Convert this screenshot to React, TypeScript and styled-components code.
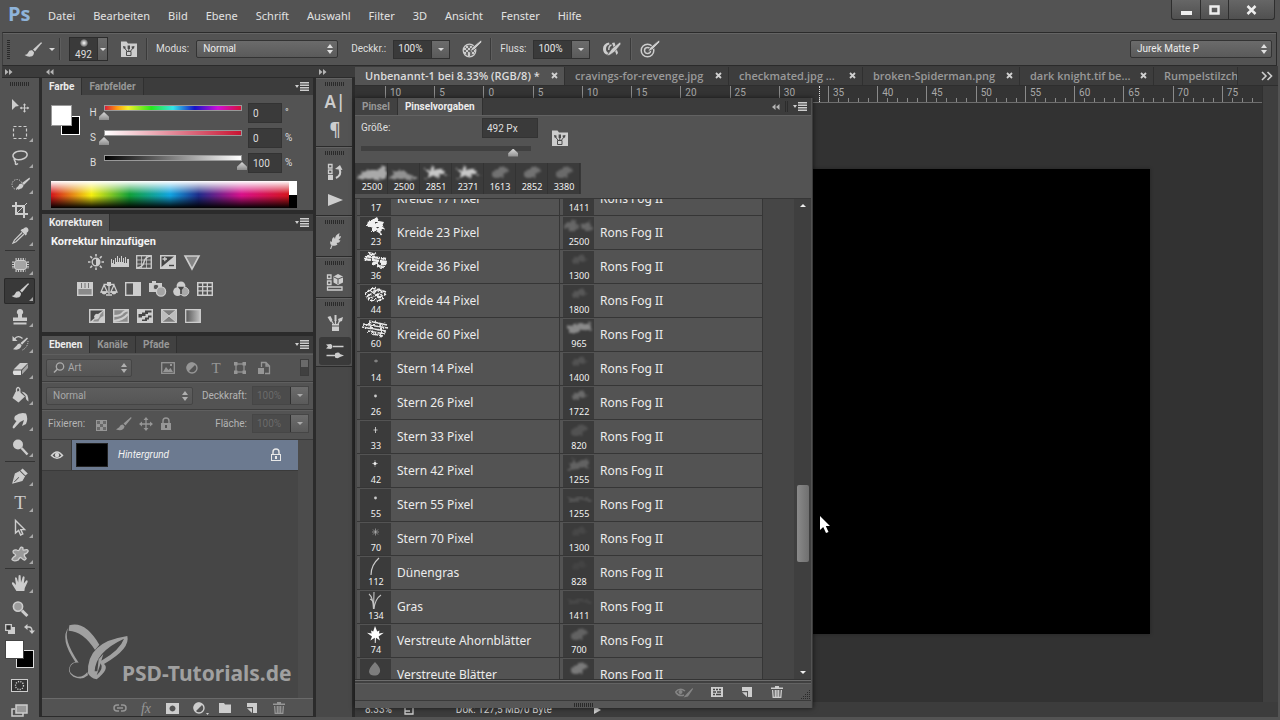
import React, { ReactNode } from "react";
import styled, { createGlobalStyle, css } from "styled-components";

const GlobalStyle = createGlobalStyle`
  *, *::before, *::after { box-sizing: border-box; }
  body { margin: 0; background: #535353; color: #dedede; font: 10px/14px Roboto, "Noto Sans", sans-serif; }
  button, input, select { font: inherit; color: inherit; margin: 0; padding: 0; border: 0; background: none; }
  h2, ul { margin: 0; padding: 0; list-style: none; }
`;

const c = {
  panel: "#535353",
  dark: "#2b2b2b",
  bar: "#3c3c3c",
  well: "#3a3a3a",
  icon: "#cdcdcd",
  dim: "#969696",
};

/* ---------- icons ---------- */

const Svg = styled.svg<{ $color?: string }>`
  display: block;
  flex: none;
  overflow: visible;
  color: ${(p) => p.$color ?? c.icon};
`;

function Icon({ w = 16, h = w, color, children }: { w?: number; h?: number; color?: string; children: ReactNode }) {
  return (
    <Svg width={w} height={h} viewBox={`0 0 ${w} ${h}`} $color={color} fill="currentColor" aria-hidden="true">
      {children}
    </Svg>
  );
}

const line = { fill: "none", stroke: "currentColor" };

const BrushPaths = () => (
  <>
    <path d="M18 2.2 L10 9.4 L12 11.4 L18.7 3.2 Q19 2 18 2.2Z" />
    <path d="M9.2 10.2 Q6 9.8 5.2 12.4 Q4.6 14.4 1.6 15 Q4.4 17 7.6 16.6 Q11 16 11 12.2Z" />
  </>
);
const TwoChevrons = ({ left = false }: { left?: boolean }) => (
  <Icon w={8} h={6} color="#b4b4b4">
    {left ? <path d="M3.5 0 V6 L0 3Z M7.5 0 V6 L4 3Z" /> : <path d="M0 0 V6 L3.5 3Z M4 0 V6 L7.5 3Z" />}
  </Icon>
);
const Caret = ({ color = "#dadada" }: { color?: string }) => (
  <Icon w={6} h={3} color={color}><path d="M0 0 H6 L3 3Z" /></Icon>
);
const UpDown = ({ color = "#e0e0e0" }: { color?: string }) => (
  <Icon w={6} h={10} color={color}><path d="M0 4 L3 0 L6 4Z M0 6 H6 L3 10Z" /></Icon>
);
const BrushFolder = () => (
  <Icon w={18} h={18}>
    <path d="M1 1.5 H6.5 L8 3.5 H17 V17 H1Z" />
    <g stroke="#4a4a4a" fill="none" strokeWidth="1">
      <path d="M6.5 11.5 V15.5 H11 V11.5Z M7 11 L4.8 8.5 M8.8 11 V9 M10.6 11 L12.6 8.5" />
    </g>
    <path fill="#4a4a4a" d="M3 6 L5.5 6.5 V9 L3.5 8.5Z M7.6 5.5 H10 V9 H7.6Z M11.5 6.5 L14.5 6 L14 8.5 L12 9Z" />
  </Icon>
);
const MenuIcon = () => (
  <Icon w={14} h={9}><path d="M0 3 H4 L2 6Z M5 0 H14 V1.4 H5Z M5 2.5 H14 V4 H5Z M5 5 H14 V6.4 H5Z M5 7.5 H14 V9 H5Z" /></Icon>
);

type Tool = { name: string; art: ReactNode; single?: boolean };
const toolGroups: Tool[][] = [
  [
    { name: "Verschieben", single: true, art: <><path d="M2 3 L9 10 L5.6 10.6 L2 14Z" /><path {...line} strokeWidth="1.1" d="M14.5 8 V16 M10.5 12 H18.5" /><path d="M14.5 7.2 L12.9 9.3 H16.1Z M14.5 16.8 L12.9 14.7 H16.1Z M9.7 12 L11.8 10.4 V13.6Z M19.3 12 L17.2 10.4 V13.6Z" /></> },
    { name: "Auswahlrechteck", art: <rect {...line} x="3.5" y="4.5" width="13" height="12" strokeWidth="1.2" strokeDasharray="3 2" /> },
    { name: "Lasso", art: <path {...line} strokeWidth="1.5" d="M5 11 C0 7 5 3 11 3 C18 3 19 8 14 10.5 C10 12.5 6 12 4.5 10.5 C3 12 6 13 5.5 15 C5 17 7 16.5 8 15.5" /> },
    { name: "Schnellauswahl", art: <><circle {...line} cx="7" cy="10.5" r="5" strokeDasharray="1.2 1.3" /><path d="M19.5 3.5 L12 9 L13.8 11 L20 5Z M11.4 9.4 Q8.6 9.6 8.4 12 L5.6 14.6 Q12 16.6 13.6 11.6Z" /></> },
    { name: "Freistellen", art: <><path {...line} strokeWidth="2" d="M6 2 V14 H18 M2 6 H14 V18" /><path {...line} d="M7 13 L17 3" /></> },
    { name: "Pipette", art: <><path d="M13 3 Q16 0 18 2.5 Q19.5 5 16.5 7 L17 8 L15.6 9.4 L10.6 4.4 L12 3Z" /><path {...line} strokeWidth="1.2" d="M12 6.5 L4.5 14 L3 17 L6 15.8 L13.8 8.2" /></> },
  ],
  [
    { name: "Reparaturpinsel", art: <><rect x="4.5" y="5.5" width="12" height="9" rx="2.5" fill="#a4a4a4" /><rect {...line} x="4.5" y="5.5" width="12" height="9" rx="2.5" strokeWidth="1" /><path {...line} strokeDasharray="1.2 1.2" strokeWidth="2" d="M5.5 4 H15.5 M5.5 16 H15.5 M3 6.5 V14 M18 6.5 V14" /></> },
    { name: "Pinsel", art: <BrushPaths /> },
    { name: "Kopierstempel", art: <><path d="M10 2 A3 3 0 0 1 12 7.4 V10.5 H17 V14 H3 V10.5 H8 V7.4 A3 3 0 0 1 10 2Z" /><path d="M3.5 15.5 H16.5 V17.5 H3.5Z" /></> },
    { name: "Protokollpinsel", art: <><path d="M17 4.5 L10.5 10 L12 11.8 L18 5.5Z M10 10.6 Q7.4 10.6 6.8 12.6 L3 16.2 Q10 18 11.6 12.6Z" /><path {...line} strokeWidth="1.4" d="M4.5 6 Q8 1.5 12.5 5.5" /><path d="M2.5 3 V8 H7.5Z" /><path {...line} strokeDasharray="1 1" d="M18 8 Q18 14 12.5 17" /></> },
    { name: "Radiergummi", art: <><path d="M10 4 H18 L11.5 10.5 H3.5Z" /><path fill="#a4a4a4" d="M18 5 V9 L12 15.5 V11.5Z" /><path fill="#dedede" d="M3.5 11.5 H11 V16 H4 Q2 14 3.5 11.5Z" /></> },
    { name: "Füllwerkzeug", art: <><path d="M8.5 6 L15 11.5 L8.5 17.5 L2.5 13 L5.5 7Z" /><path {...line} strokeWidth="1.3" d="M6.5 10 V4 Q8 1 9.8 4 V9" /><path d="M11.5 6.5 Q18.5 7.5 18.5 16.5 Q15.5 15 15.6 11Z" /></> },
    { name: "Wischfinger", art: <path d="M5 5 Q10 1 16 2.5 Q18.5 8 16 13 L12 15 L14 9 L10 11 L4 17.5 Q2 17.5 3 15 L6.5 10 Q3 9 5 5Z" /> },
    { name: "Abwedler", art: <><circle cx="8" cy="7.5" r="5" /><path {...line} strokeWidth="2.4" d="M11.5 11 L17.5 17.5" /></> },
  ],
  [
    { name: "Zeichenstift", art: <><path d="M12.6 2.4 L17.8 7.4 L15.4 9.6 L10.4 4.6Z" /><path {...line} strokeWidth="1.2" d="M10 5.4 L5.4 8 L3 17 L12 14.4 L14.6 10" /><path d="M10 5.4 L5.4 8 L3.6 16 L8.6 11 L9.2 11.6 L4.4 16.6 L12 14.4 L14.6 10Z" /></> },
    { name: "Text", art: <text x="10" y="16.5" fontSize="19" textAnchor="middle" fontFamily="Liberation Serif, serif">T</text> },
    { name: "Pfadauswahl", art: <path {...line} strokeWidth="1.4" d="M5.5 2.5 V15 L8.6 12.4 L10.6 17 L12.8 16 L10.8 11.6 H14.6Z" /> },
    { name: "Eigene Form", art: <path fill="#9a9a9a" stroke="currentColor" strokeWidth="1.3" d="M9.5 5.5 Q11 1.5 13 4 Q12.6 6 13.6 6.2 Q18 4.6 18.2 7 Q17 10 14.4 10 Q13.6 12 16.2 14.4 Q15 18 11 13.6 Q9.8 13 8.4 15.8 Q4 18 2 15.6 Q2 14 5.6 11.6 Q6 10.6 3.4 9 Q2 6 6 5.8 Q8.6 7.4 9.5 5.5Z" /> },
  ],
  [
    { name: "Hand", art: <path d="M6.4 18 L2 11 Q1.4 8.6 3.6 9.6 L6 12 L5 5 Q5.6 3.4 6.8 5 L8.2 9.6 L8.6 2.6 Q9.8 1.2 10.6 2.6 L11 9.6 L12.8 3.8 Q14 2.6 14.6 4.4 L13.8 10.6 L16.2 7.4 Q18 6.8 17.6 9 L14.8 15 L14.4 18Z" /> },
    { name: "Zoom", single: true, art: <><circle cx="8" cy="7.6" r="4.6" fill="#9c9c9c" stroke="currentColor" strokeWidth="1.6" /><path {...line} strokeWidth="3" d="M12 11.6 L17.4 17" /></> },
  ],
];

const adjustIcons: { name: string; art: ReactNode }[][] = [
  [
    { name: "Helligkeit", art: <><circle {...line} cx="8" cy="8" r="3.8" strokeWidth="1.4" /><path d="M8 4.2 A3.8 3.8 0 0 1 8 11.8Z" /><path {...line} strokeWidth="1.6" d="M8 0 V2.5 M8 13.5 V16 M0 8 H2.5 M13.5 8 H16 M2.3 2.3 L4.1 4.1 M11.9 11.9 L13.7 13.7 M2.3 13.7 L4.1 11.9 M11.9 4.1 L13.7 2.3" /></> },
    { name: "Tonwertkorrektur", art: <path d="M-1 13 V5 H0 V9 H1 V6 H2 V10 H3 V4 H4 V8 H5 V2 H6 V8 H7 V4 H8 V8 H9 V2 H10 V8 H11 V4 H12 V9 H13 V3 H14 V9 H15 V5 H17 V13Z" /> },
    { name: "Gradationskurven", art: <><rect {...line} x=".7" y="1.7" width="14.6" height="12.6" strokeWidth="1.3" /><path {...line} strokeWidth=".8" d="M5.5 2 V14 M10.5 2 V14 M1 6 H15 M1 10 H15" /><path {...line} strokeWidth="1.4" d="M1 14 Q7 13 8 8 Q9 2.6 15 2" /></> },
    { name: "Belichtung", art: <><path d="M0 1 H16 V15 H0Z" /><path fill="#444" d="M1.5 2.5 H14 L1.5 13Z" /><path {...line} strokeWidth="1.3" d="M2.5 5 H7 M4.8 3 V7.3" /><path stroke="#444" strokeWidth="1.4" d="M9 11.5 H14" /></> },
    { name: "Dynamik", art: <path d="M1 2 H15 L8 15Z" fill="#858585" stroke="currentColor" strokeWidth="1.6" /> },
  ],
  [
    { name: "Farbton", art: <><path d="M0 1 H16 V15 H0Z" /><path fill="#8a8a8a" d="M1.4 8 H14.6 V13.6 H1.4Z" /><path stroke="#777" strokeWidth="1" d="M4.5 2 V7 M8 2 V7 M11.5 2 V7" /></> },
    { name: "Farbbalance", art: <><path {...line} strokeWidth="1.3" d="M8 1 V13 M2.5 3.5 H13.5 M3 4 L0 11 H6.4Z M13 4 L9.8 11 H16Z M5 14 H11" /><path d="M0 10.5 H6.4 Q5 13.5 3.2 13.5 Q1 13.5 0 10.5Z M9.6 10.5 H16 Q15 13.5 12.8 13.5 Q11 13.5 9.6 10.5Z M6 1 H10 V5 H6Z" /></> },
    { name: "Schwarzweiß", art: <><rect {...line} x=".7" y="1.7" width="14.6" height="12.6" strokeWidth="1.4" /><path d="M8 2 H15 V14 H8Z" /></> },
    { name: "Fotofilter", art: <><path d="M0 2 H3 V0 H7 V2 H13 V7 H8 V11 H0Z" /><circle cx="7" cy="6" r="2.8" fill="#555" stroke="currentColor" /><circle cx="12" cy="10.5" r="4.6" fill="#a4a4a4" stroke="currentColor" strokeWidth="1.3" /></> },
    { name: "Kanalmixer", art: <><circle cx="8" cy="4.8" r="4.4" /><circle cx="4.6" cy="10.6" r="4.4" /><circle cx="11.4" cy="10.6" r="4.4" fill="#a8a8a8" stroke="currentColor" /><path fill="#444" d="M4.8 5.8 H11.2 L8.8 9 V13 H7.2 V9Z" /></> },
    { name: "Color Lookup", art: <path fillRule="evenodd" d="M0 1 H16 V15 H0Z M1.5 2.5 V5 H5 V2.5Z M6.3 2.5 V5 H9.7 V2.5Z M11 2.5 V5 H14.6 V2.5Z M1.5 6.3 V9.3 H5 V6.3Z M6.3 6.3 V9.3 H9.7 V6.3Z M11 6.3 V9.3 H14.6 V6.3Z M1.5 10.6 V13.6 H5 V10.6Z M6.3 10.6 V13.6 H9.7 V10.6Z M11 10.6 V13.6 H14.6 V10.6Z" /> },
  ],
  [
    { name: "Umkehren", art: <><path d="M0 1 H16 V15 H0Z" /><path fill="#484848" d="M1.5 2.5 H14 L9 6 Q6 5 5 8.6 L5.6 10 L1.5 13.5Z" /><path fill="#484848" d="M5.4 11.4 Q10 12.4 11 7 L14.4 3 V8 Q11 9 9.4 13.4 H4Z" opacity=".45" /></> },
    { name: "Tontrennung", art: <><path d="M.7 1.7 H15.3 V14.3 H.7Z" fill="#8c8c8c" stroke="currentColor" strokeWidth="1.3" /><path {...line} strokeWidth="2" d="M1 8 Q8 8 10 4.5 Q12 2.5 15 2.5 M1 13 Q10 12 15 6" /></> },
    { name: "Schwellenwert", art: <><path d="M0 1 H16 V15 H0Z" /><path fill="#444" d="M1.5 6 H5 V4.5 H8 V2.5 H14.5 V4.5 H11 V6 H8.5 V8 H5 V9.5 H1.5Z M5 13 V11.5 H8 V9.5 H11 V7.5 H14.5 V9.5 H12 V11.5 H10 V13Z" /></> },
    { name: "Selektive Farbkorrektur", art: <><path d="M.7 1.7 H15.3 V14.3 H.7Z" fill="#7d7d7d" stroke="currentColor" strokeWidth="1.3" /><path fill="#bdbdbd" d="M1 2 L8 8 L1 14Z M15 2 L8 8 L15 14Z" /><path {...line} d="M1 2 L15 14 M15 2 L1 14" /></> },
    { name: "Verlaufsumsetzung", art: <path d="M.7 1.7 H15.3 V14.3 H.7Z" fill="url(#ramp)" stroke="currentColor" strokeWidth="1.3" /> },
  ],
];

/* ---------- brush previews ---------- */

const HiddenDefs = styled.svg`position: absolute;`;

const Defs = () => (
  <HiddenDefs width="0" height="0" aria-hidden="true">
    <defs>
      <linearGradient id="ramp"><stop stopColor="#555" /><stop offset="1" stopColor="#c4c4c4" /></linearGradient>
      <filter id="fog" x="-60%" y="-60%" width="220%" height="220%">
        <feTurbulence type="fractalNoise" baseFrequency=".2" numOctaves="3" seed="7" />
        <feDisplacementMap in="SourceGraphic" scale="8" xChannelSelector="R" yChannelSelector="G" />
        <feGaussianBlur stdDeviation="1.1" />
      </filter>
      <filter id="chalk" x="-30%" y="-30%" width="160%" height="160%">
        <feTurbulence type="fractalNoise" baseFrequency=".4" numOctaves="2" seed="9" />
        <feDisplacementMap in="SourceGraphic" scale="3" xChannelSelector="R" yChannelSelector="G" />
      </filter>
    </defs>
  </HiddenDefs>
);

const art: Record<string, ReactNode> = {
  none: null,
  chalk23: <path filter="url(#chalk)" d="M8 4 L14 2 L17 0 L19 4 L24 5 L22 9 L25 12 L20 13 L22 18 L16 14 L12 15 L12 11 L7 9Z M14 5 L16 7 L18 5Z M16 10 L18 12 L19 10Z" fill="#f0f0f0" fillRule="evenodd" />,
  chalk36: <g filter="url(#chalk)" stroke="#eee" strokeWidth="2.4" fill="none"><path d="M8 2 L16 4 M5 5 L26 8 M4 8 L27 11 M12 12 L26 13 M17 15 L24 16" strokeDasharray="7 1" /></g>,
  chalk44: <g filter="url(#chalk)" stroke="#eee" strokeWidth="1.8" fill="none"><path d="M5 9 L12 3 L26 7 M6 12 L20 4 M8 14 L24 6 M11 16 L26 9 M16 17 L24 13 M10 5 L22 14" strokeDasharray="6 1" /></g>,
  chalk60: <g filter="url(#chalk)" stroke="#e6e6e6" strokeWidth="1.6" fill="none"><path d="M9 2 L27 6 M3 5 L28 9 M2 8 L26 12 M8 12 L25 15 M12 15 L23 17 M9 3 L13 14 M20 5 L22 15" /></g>,
  star1: <path d="M14 8 H18 M16 6.5 V9.5" stroke="#aaa" strokeWidth=".8" />,
  star2: <circle cx="15.5" cy="9" r="1.4" fill="#ccc" />,
  star3: <path d="M13.5 9 H17.5 M15.5 6 V12" stroke="#ddd" strokeWidth=".8" />,
  star4: <><path d="M12 8.5 H18 M15 5 V12" stroke="#aaa" strokeWidth=".7" /><circle cx="15" cy="8.5" r="1.5" fill="#eee" /></>,
  star5: <path d="M12 9 H19 M15.5 5.5 V12.5 M13 6.5 L18 11.5 M18 6.5 L13 11.5" stroke="#bbb" strokeWidth=".6" />,
  dune: <path d="M11 18 Q11 8 19 1" fill="none" stroke="#ccc" strokeWidth="1.2" />,
  grass: <path d="M13.5 18 Q13 6 9 3 M13.5 18 L14 1 M14 18 Q15 8 21 4 M13.5 14 Q13 9 10 8" fill="none" stroke="#c4c4c4" strokeWidth="1.1" />,
  maple: <path d="M15 1 L17.2 6.4 L19.4 5.4 L19 8.4 L23.8 7.8 L18.6 11.4 L20 15.6 L16 12.8 L15.6 18 L14.8 18 L14.8 12.8 L10.4 15.6 L12 11.4 L7 7.8 L11.6 8.4 L11 5.4 L13.2 6.4Z" fill="#fff" />,
  leaf: <path d="M15 3 Q21 9 20 13 Q18 17 15 16.5 Q10 17 9 13 Q9 9 15 3Z" fill="#7e7e7e" />,
};

const Fog = ({ level, shape }: { level: number; shape: number }) => (
  <g filter="url(#fog)" fill="#d8d8d8" opacity={level}>
    {shape === 0 && <><ellipse cx="9" cy="9" rx="6" ry="5" /><ellipse cx="23" cy="10" rx="6" ry="4" /></>}
    {shape === 1 && <><ellipse cx="16" cy="9" rx="7" ry="3" /><ellipse cx="19" cy="7" rx="3" ry="4" /></>}
    {shape === 2 && <><ellipse cx="11" cy="10" rx="7" ry="4" /><ellipse cx="19" cy="8" rx="9" ry="4" /></>}
    {shape === 3 && <path d="M4 15 L10 4 L15 9 L23 2 L27 13Z" />}
    {shape === 4 && <><ellipse cx="13" cy="11" rx="5" ry="4" /><ellipse cx="19" cy="7" rx="5" ry="4" /><circle cx="17" cy="12" r="3" /></>}
    {shape === 5 && <path d="M5 9 H28 V12 H5Z" />}
    {shape === 6 && <path d="M3 11 L12 7 L18 8 L30 3 V16 H2Z" />}
    {shape === 7 && <path d="M2 16 L4 10 L12 7 L20 12 L29 13 V16 H2Z" />}
    {shape === 8 && <path d="M4 4 L9 8 L14 3 L15 8 L24 4 L22 8 L29 12 L20 11 L18 16 L13 12 L5 16 L9 11Z" />}
  </g>
);

const recent: [string, number, number][] = [
  ["2500", 0.7, 6], ["2500", 0.55, 7], ["2851", 0.9, 8], ["2371", 0.9, 8], ["1613", 0.35, 4], ["2852", 0.35, 4], ["3380", 0.3, 4],
];
const leftBrushes: [string, string, string][] = [
  ["17", "Kreide 17 Pixel", "none"], ["23", "Kreide 23 Pixel", "chalk23"], ["36", "Kreide 36 Pixel", "chalk36"],
  ["44", "Kreide 44 Pixel", "chalk44"], ["60", "Kreide 60 Pixel", "chalk60"], ["14", "Stern 14 Pixel", "star1"],
  ["26", "Stern 26 Pixel", "star2"], ["33", "Stern 33 Pixel", "star3"], ["42", "Stern 42 Pixel", "star4"],
  ["55", "Stern 55 Pixel", "star2"], ["70", "Stern 70 Pixel", "star5"], ["112", "Dünengras", "dune"],
  ["134", "Gras", "grass"], ["74", "Verstreute Ahornblätter", "maple"], ["100", "Verstreute Blätter", "leaf"],
];
const rightBrushes: [string, number, number][] = [
  ["1411", 0, 1], ["2500", 0.28, 0], ["1300", 0.15, 1], ["1800", 0.18, 1], ["965", 0.5, 2], ["1400", 0.15, 1], ["1722", 0.3, 1],
  ["820", 0.15, 4], ["1255", 0.25, 3], ["1255", 0.16, 5], ["1300", 0.08, 1], ["828", 0.05, 1], ["1411", 0.08, 5], ["700", 0.25, 4], ["1200", 0.4, 4],
];

/* ---------- frame ---------- */

const Shell = styled.div`
  display: flex;
  flex-direction: column;
  height: 100vh;
  overflow: hidden;
  padding: 0 2px 3px;
  background: ${c.panel};
`;
const MenuBar = styled.header`
  display: flex;
  align-items: center;
  height: 32px;
  flex: none;
  padding-left: 6px;
`;
const Logo = styled.span`
  width: 34px;
  padding-bottom: 4px;
  color: #8fb4da;
  font: 700 20px/28px "Open Sans", sans-serif;
`;
const Menu = styled.nav`
  display: flex;
  gap: 18px;
  padding-left: 6px;
  button { font: 11px/18px "Noto Sans", sans-serif; color: #e2e2e2; }
`;
const WindowButtons = styled.div`
  display: flex;
  align-self: flex-start;
  margin: 0 3px 0 auto;
  border: 1px solid #2e2e2e;
  border-top: 0;
  border-radius: 0 0 3px 3px;
  background: linear-gradient(#666, #505050);
  button { display: flex; align-items: center; justify-content: center; width: 28px; height: 19px; }
  button + button { border-left: 1px solid #2e2e2e; }
  button:last-child { width: 46px; }
`;
const OptionsBar = styled.div`
  display: flex;
  align-items: center;
  flex: none;
  height: 34px;
  margin-right: 1px;
  padding: 0 4px;
  border: 1px solid ${c.dark};
  border-left-color: #3e3e3e;
  box-shadow: inset 0 1px #646464;
`;
const Grip = styled.span<{ $vertical?: boolean }>`
  display: block;
  flex: none;
  align-self: center;
  ${(p) =>
    p.$vertical
      ? css`width: 3px; height: 19px; background: repeating-linear-gradient(#2a2a2a 0 1px, transparent 1px 2px);`
      : css`width: 19px; height: 4px; background: repeating-linear-gradient(90deg, #2a2a2a 0 1px, transparent 1px 2px);`}
`;
const Rule = styled.span`
  width: 2px;
  height: 22px;
  margin: 0 8px;
  border-left: 1px solid #3a3a3a;
  border-right: 1px solid #5e5e5e;
`;
const PlainButton = styled.button`
  display: flex;
  align-items: center;
  justify-content: center;
  gap: 8px;
`;
const BrushPick = styled(PlainButton)`margin: 0 -4px 0 13px; gap: 6px;`;
const FolderSlot = styled(PlainButton)`margin-left: 12px;`;
const AirSlot = styled(PlainButton)`margin-left: 12px;`;
const PresetButton = styled.button`
  display: flex;
  height: 24px;
  border: 1px solid #2c2c2c;
  background: ${c.well};
`;
const PresetFace = styled.span`
  display: flex;
  flex-direction: column;
  align-items: center;
  justify-content: space-between;
  width: 27px;
  height: 22px;
  line-height: 11px;
  &::before { content: ""; width: 8px; height: 8px; border-radius: 50%; margin-top: 1px; background: radial-gradient(#fff, rgba(180,180,180,.6) 55%, transparent 75%); }
`;
const Drop = styled.span`
  display: flex;
  align-items: center;
  justify-content: center;
  width: 18px;
  align-self: stretch;
  border-left: 1px solid #303030;
  background: linear-gradient(#6c6c6c, #5a5a5a);
`;
const PresetDrop = styled(Drop)`width: 10px;`;

const Picker = styled.span<{ $w: number; $dim?: boolean }>`
  display: flex;
  align-items: center;
  width: ${(p) => p.$w}px;
  height: 18px;
  padding: 0 6px;
  border: 1px solid ${(p) => (p.$dim ? "#454545" : "#333")};
  border-radius: 2px;
  background: linear-gradient(${(p) => (p.$dim ? "#5e5e5e, #555" : "#6b6b6b, #5a5a5a")});
  color: ${(p) => (p.$dim ? "#a8a8a8" : "#ececec")};
  select { appearance: none; flex: 1; min-width: 0; height: 16px; cursor: default; }
  > svg:last-child { pointer-events: none; margin-right: -2px; }
`;
const PickerGlass = styled.span`margin-right: 4px;`;
const Combo = styled.span<{ $dim?: boolean }>`
  display: flex;
  height: 19px;
  border: 1px solid ${(p) => (p.$dim ? "#464646" : "#303030")};
  background: ${(p) => (p.$dim ? "#4b4b4b" : c.well)};
  color: ${(p) => (p.$dim ? "#6a6a6a" : "#e6e6e6")};
  input { width: 37px; padding-left: 4px; }
`;
const OptLabel = styled.label`margin-right: 7px;`;
const NextLabel = styled(OptLabel)`margin-left: 13px;`;
const Spread = styled.span`flex: 1;`;

const Workspace = styled.main`
  display: flex;
  flex: 1;
  min-height: 0;
  gap: 3px;
  background: ${c.dark};
`;
const Column = styled.div<{ $w: number }>`
  display: flex;
  flex-direction: column;
  flex: none;
  width: ${(p) => p.$w}px;
`;
const Collapse = styled.button<{ $pad: number }>`
  display: flex;
  align-items: center;
  flex: none;
  height: 11px;
  padding-left: ${(p) => p.$pad}px;
  background: ${c.bar};
  margin: 0 -3px 1px 0;
`;

/* ---------- tool strip ---------- */

const Tools = styled.div`
  display: flex;
  flex-direction: column;
  align-items: center;
  flex: 1;
  padding: 3px 2px 0 0;
  background: ${c.panel};
`;
const ToolButton = styled.button<{ $on?: boolean }>`
  position: relative;
  display: flex;
  align-items: center;
  justify-content: center;
  width: 31px;
  height: 26px;
  flex: none;
  ${(p) => p.$on && css`background: #393939; box-shadow: inset 0 0 0 1px #2a2a2a; border-radius: 2px;`}
`;
const Corner = styled.i`
  position: absolute;
  right: 2px;
  bottom: 3px;
  border: 2px solid transparent;
  border-right-color: #a8a8a8;
  border-bottom-color: #a8a8a8;
`;
const ToolGap = styled.hr`
  width: 30px;
  height: 1px;
  flex: none;
  margin: 1px 0;
  border: 0;
  background: #333;
`;
const ToolGrip = styled.div`height: 12px; padding-top: 1px; flex: none;`;
const SwapRow = styled.div`
  display: flex;
  justify-content: space-between;
  align-items: center;
  width: 29px;
  height: 14px;
  flex: none;
  margin-bottom: 4px;
`;
const Swatches = styled.div`
  display: grid;
  flex: none;
  width: 29px;
  height: 28px;
  > i { grid-area: 1 / 1; width: 19px; height: 19px; border: 1px solid #444; background: #fff; z-index: 1; }
  > i + i { align-self: end; justify-self: end; width: 18px; height: 18px; border-color: #ddd; background: #000; z-index: 0; }
`;
const ToolFoot = styled.div`
  display: flex;
  flex-direction: column;
  gap: 12px;
  padding-top: 11px;
  align-items: center;
`;

/* ---------- panels ---------- */

const Panel = styled.section<{ $grow?: boolean }>`
  display: flex;
  flex-direction: column;
  flex: ${(p) => (p.$grow ? 1 : "none")};
  min-height: 0;
  margin-bottom: ${(p) => (p.$grow ? 1 : 4)}px;
`;
const TabRow = styled.div`
  display: flex;
  align-items: center;
  flex: none;
  height: 17px;
  padding-right: 4px;
  background: ${c.bar};
`;
const Tab = styled.button<{ $on?: boolean }>`
  height: 17px;
  padding: 1px 7px 0;
  font-weight: 700;
  color: ${(p) => (p.$on ? "#ececec" : "#979797")};
  background: ${(p) => (p.$on ? c.panel : "#414141")};
  border-right: 1px solid #303030;
`;
const TabTools = styled.div`
  display: flex;
  align-items: center;
  gap: 5px;
  margin-left: auto;
`;
const ThinRule = styled.span`width: 3px; height: 11px; border: solid #2c2c2c; border-width: 0 1px;`;
const ColorBody = styled.div`
  display: grid;
  grid-template-columns: 29px 1fr;
  column-gap: 8px;
  padding: 8px 0 2px 9px;
  background: ${c.panel};
`;
const ColorSwatch = styled(Swatches)`
  height: 30px;
  margin-top: 2px;
  > i { width: 21px; height: 21px; border-color: #999; }
  > i + i { width: 19px; height: 19px; border-color: #fff; }
`;
const SliderRow = styled.div`
  display: flex;
  height: 25px;
  label { width: 10px; margin-top: 3px; text-align: center; }
  > input[type="text"] { width: 34px; height: 20px; margin: 0 3px 0 1px; padding-left: 4px; background: ${c.well}; border: 1px solid #333; }
  > span { margin-top: 3px; }
`;
const thumb = css`
  -webkit-appearance: none;
  width: 10px;
  height: 8px;
  background: linear-gradient(#d8d8d8, #8c8c8c);
  clip-path: polygon(50% 0, 100% 60%, 100% 100%, 0 100%, 0 60%);
`;
const Slider = styled.input<{ $fill: string }>`
  -webkit-appearance: none;
  width: 148px;
  height: 16px;
  margin: 2px 0 0 1px;
  background: ${(p) => p.$fill} 6px 1px / calc(100% - 12px) 4px no-repeat, linear-gradient(#999, #999) 5px 0 / calc(100% - 10px) 6px no-repeat;
  &::-webkit-slider-thumb { ${thumb} margin-top: 7px; }
  &::-webkit-slider-runnable-track { height: 16px; }
`;
const Spectrum = styled.div`
  display: flex;
  height: 30px;
  background: ${c.panel};
  padding: 1px 16px 0 9px;
  > i { flex: 1; height: 27px; background: linear-gradient(#fff, rgba(255,255,255,0) 48%, rgba(0,0,0,0) 55%, #000), linear-gradient(90deg, #d4151c, #f5ee10 17%, #12a038 33%, #10a4e0 50%, #1e2c8a 62%, #d8108a 80%, #d4151c); }
  > i + i { flex: none; width: 8px; background: linear-gradient(#fff 50%, #000 50%); }
`;
const PanelHint = styled.h2`
  padding: 4px 9px 0;
  font-size: 11px;
  line-height: 14px;
  color: #f4f4f4;
`;
const AdjustBody = styled.div`
  display: flex;
  flex-direction: column;
  height: 101px;
  background: ${c.panel};
`;
const AdjustRow = styled.div<{ $indent: number }>`
  display: flex;
  gap: 8px;
  height: 27px;
  padding: 4px 0 0 ${(p) => p.$indent}px;
  button { height: 18px; }
`;
const LayerBars = styled.div`
  flex: none;
  padding: 1px 0;
  background: ${c.panel};
  border-bottom: 1px solid #3a3a3a;
`;
const LayerBar = styled.div`
  display: flex;
  align-items: center;
  height: 28px;
  padding: 0 4px;
  border-bottom: 1px solid #3c3c3c;
  box-shadow: inset 0 1px #5f5f5f;
  color: #b4b4b4;
  &:last-child { border-color: transparent; }
`;
const FilterIcons = styled.div`display: flex; gap: 8px; margin-left: 28px;`;
const LockLabel = styled.span`margin-left: 2px;`;
const LockIcons = styled.div`display: flex; align-items: center; gap: 7px; margin-left: 9px;`;
const Toggle = styled.span`width: 9px; height: 17px; margin-left: auto; background: linear-gradient(#6a6a6a 45%, #404040 45%); border: 1px solid #3c3c3c;`;
const RightLabel = styled.label`margin: 0 5px 0 auto;`;
const LayerList = styled.ul`
  display: flex;
  flex-direction: column;
  flex: 1;
  min-height: 0;
  border-right: 15px solid #4c4c4c;
  background: #464646;
`;
const Layer = styled.li`
  display: grid;
  grid-template-columns: 30px 1fr;
  height: 31px;
  border-bottom: 1px solid #3a3a3a;
  > span { display: grid; place-items: center; background: ${c.panel}; border-right: 1px solid #3a3a3a; }
`;
const LayerFace = styled.button`
  display: flex;
  align-items: center;
  gap: 10px;
  padding: 0 16px 0 4px;
  background: #6c7a90;
  color: #f2f2f2;
  font-style: italic;
  &::before { content: ""; width: 32px; height: 24px; background: #000; border: 1px solid #222; }
  > svg { margin-left: auto; }
`;
const LayerFoot = styled.div`
  display: flex;
  align-items: center;
  justify-content: flex-end;
  gap: 11px;
  height: 18px;
  flex: none;
  padding-right: 28px;
  background: ${c.panel};
  border-top: 1px solid #6a6a6a;
`;
const Watermark = styled.div`
  position: absolute;
  left: 65px;
  bottom: 38px;
  display: flex;
  align-items: flex-end;
  color: #a0a0a0;
  font: 700 21px/30px "Noto Sans", sans-serif;
  pointer-events: none;
  span { margin: 0 0 -6px -8px; }
`;

/* ---------- icon dock ---------- */

const Dock = styled.div`
  display: flex;
  flex-direction: column;
  flex: 1;
  background: #484848;
`;
const DockGroup = styled.div`
  display: flex;
  flex-direction: column;
  align-items: center;
  padding: 3px 0 1px;
  background: ${c.panel};
  border-top: 1px solid #626262;
  border-bottom: 1px solid ${c.dark};
  > ${Grip} { margin-bottom: 3px; }
`;
const DockButton = styled.button<{ $on?: boolean }>`
  display: grid;
  place-items: center;
  width: 32px;
  height: 28px;
  margin-left: 2px;
  ${(p) => p.$on && css`background: #3a3a3a; border-radius: 3px;`}
`;
const DockLetter = styled.span`
  padding-bottom: 3px;
  color: ${c.icon};
  font: 600 17px/24px "Noto Sans", sans-serif;
`;

/* ---------- document ---------- */

const DocArea = styled.div`
  position: relative;
  display: flex;
  flex-direction: column;
  flex: 1;
  min-width: 0;
  background: #323232;
`;
const DocTabs = styled.div`
  display: flex;
  flex: none;
  height: 20px;
  padding-top: 1px;
  background: ${c.bar};
  border-bottom: 1px solid #2e2e2e;
`;
const DocTab = styled.div<{ $w: number; $on?: boolean }>`
  display: flex;
  align-items: center;
  flex: 0 0 ${(p) => p.$w}px;
  justify-content: space-between;
  padding: 0 6px 2px 10px;
  overflow: hidden;
  white-space: nowrap;
  border-right: 1px solid #303030;
  background: ${(p) => (p.$on ? c.panel : "#3d3d3d")};
  color: ${(p) => (p.$on ? "#dcdcdc" : "#999")};
  font: 600 11px/17px "Open Sans", sans-serif;
`;
const MoreTabs = styled(PlainButton)`margin-left: auto; padding-right: 5px;`;
const Ruler = styled.div`
  position: relative;
  display: flex;
  flex: none;
  height: 17px;
  margin-right: 16px;
  padding-left: 30px;
  overflow: hidden;
  background: #343434;
  border-bottom: 1px solid #6e6e6e;
`;
const RulerCells = styled.div`
  display: grid;
  grid-template-columns: repeat(18, 1fr);
  flex: 1;
  margin-right: -9px;
`;
const RulerCell = styled.span`
  padding-left: 4px;
  border-left: 1px solid #8a8a8a;
  color: #a8a8a8;
  line-height: 14px;
  background: repeating-linear-gradient(90deg, transparent 0 9px, #8a8a8a 9px 10px) bottom / 100% 4px no-repeat;
`;
const PointerMark = styled.i`
  position: absolute;
  left: 464px;
  top: 0;
  bottom: 0;
  border-left: 1px dotted #ddd;
`;
const Canvas = styled.div`
  display: flex;
  flex: 1;
  min-height: 0;
  align-items: flex-start;
  padding: 66px 0 0 128px;
`;
const Artboard = styled.div`
  flex: 1;
  aspect-ratio: 667 / 465;
  margin-right: 112px;
  background: #000;
  box-shadow: 0 0 3px #222;
`;
const VScroll = styled.div`
  align-self: stretch;
  width: 16px;
  margin-top: -83px;
  background: #3f3f3f;
  border-left: 1px solid #303030;
`;
const Status = styled.footer`
  display: flex;
  align-items: center;
  gap: 12px;
  flex: none;
  height: 15px;
  padding-left: 10px;
  background: ${c.bar};
  color: #d4d4d4;
  line-height: 14px;
  > span:nth-child(3) { margin-left: 30px; }
  > svg:last-child { margin-left: 30px; }
`;

/* ---------- floating brush panel ---------- */

const BrushPanel = styled.section`
  position: absolute;
  left: 0;
  top: 32px;
  bottom: 9px;
  display: flex;
  flex-direction: column;
  width: 458px;
  padding-right: 1px;
  background: ${c.panel};
  border-right: 1px solid #3a3a3a;
  box-shadow: 0 0 5px rgba(0, 0, 0, .6);
`;
const SizeBody = styled.div`
  display: grid;
  grid-template-columns: 121px 56px 1fr;
  grid-template-rows: 20px 24px;
  align-items: center;
  padding: 2px 6px 0;
  flex: none;
  height: 48px;
  border-top: 1px solid #626262;
  input[type="text"] { height: 20px; padding-left: 4px; background: ${c.well}; border: 1px solid #333; }
  > button { grid-row: 1 / 3; grid-column: 3; justify-self: start; margin: 0 0 4px 13px; }
`;
const SizeSlider = styled.input`
  grid-column: 1 / 3;
  -webkit-appearance: none;
  width: 178px;
  height: 18px;
  margin: 5px 0 0 -4px;
  background: linear-gradient(#404040, #404040) 4px 2px / 170px 5px no-repeat;
  &::-webkit-slider-thumb { ${thumb} margin-top: 5px; }
  &::-webkit-slider-runnable-track { height: 18px; }
`;
const Recent = styled.div`
  display: flex;
  align-self: flex-start;
  flex: none;
  height: 31px;
  margin-bottom: 4px;
  padding: 0 1px;
  background: #383838;
`;
const Thumb = styled.span`
  position: relative;
  display: flex;
  flex-direction: column;
  align-items: center;
  justify-content: flex-end;
  flex: none;
  width: 31px;
  overflow: hidden;
  color: #f2f2f2;
  background: #3b3b3b;
  font: 9px/10px "Noto Sans", sans-serif;
  padding: 0 0 2px 1px;
  > svg { position: absolute; inset: 0 auto auto 0; }
  > b { position: relative; font-weight: 400; }
`;
const RecentButton = styled.button`
  display: flex;
  width: 32px;
  border-right: 1px solid #333;
`;
const ListFrame = styled.div`
  display: grid;
  grid-template-columns: 1fr 17px;
  flex: 1;
  min-height: 0;
  overflow: hidden;
  border-top: 1px solid #363636;
  background: #464646;
`;
const List = styled.div`
  display: grid;
  grid-template-columns: 203px 203px;
  grid-auto-rows: 34px;
  align-content: start;
  min-height: 0;
  margin-top: -18px;
  padding-left: 2px;
`;
const BrushItem = styled.button`
  display: flex;
  align-items: center;
  gap: 6px;
  padding-left: 3px;
  text-align: left;
  background: ${c.panel};
  border: solid #363636;
  border-width: 1px 1px 0 0;
  color: #ececec;
  > ${Thumb} { height: 32px; }
  > em { font: 12px/18px "Noto Sans", sans-serif; }
`;
const ListScroll = styled.div`
  display: flex;
  flex-direction: column;
  align-items: center;
  min-height: 0;
  padding: 5px 0;
  background: #3f3f3f;
  > span { flex: 275; }
  > i { width: 12px; height: 77px; border-radius: 2px; background: linear-gradient(90deg, #8a8a8a, #707070); }
  > i + span { flex: 108; }
`;
const BrushFoot = styled.div`
  display: flex;
  align-items: center;
  justify-content: flex-end;
  flex: none;
  height: 21px;
  padding: 3px 0 0;
  gap: 18px;
  border-top: 1px solid #333;
  box-shadow: inset 0 1px #6c6c6c, inset 0 3px #404040, inset 0 4px #626262;
  > svg:last-child { align-self: flex-end; }
`;
const BrushBase = styled.div`
  display: grid;
  place-items: center;
  flex: none;
  height: 8px;
  border-top: 1px solid #3a3a3a;
  background: #565656;
`;
const Cursor = styled.div`
  position: absolute;
  left: 465px;
  top: 450px;
  pointer-events: none;
`;

const menus = ["Datei", "Bearbeiten", "Bild", "Ebene", "Schrift", "Auswahl", "Filter", "3D", "Ansicht", "Fenster", "Hilfe"];
const docs: [string, number][] = [["cravings-for-revenge.jpg", 164], ["checkmated.jpg ...", 134], ["broken-Spiderman.png", 157], ["dark knight.tif be...", 134]];
const ticks = ["10", "5", "0", "5", "10", "15", "20", "25", "30", "35", "40", "45", "50", "55", "60", "65", "70", "75"];

const CloseX = () => (
  <Icon w={7} h={7} color="#d0d0d0"><path {...line} strokeWidth="1.8" d="M1 1 L6 6 M6 1 L1 6" /></Icon>
);
const Lock = ({ open = false }: { open?: boolean }) => (
  <Icon w={12} h={14} color={open ? "#e8e8e8" : c.dim}>
    <path {...line} strokeWidth="1.4" d="M3 6 V4 Q3 1 6 1 Q9 1 9 4 V6" />
    {open ? <><rect {...line} x="1.5" y="6.5" width="9" height="6" /><path d="M5 8 H7 V11 H5Z" /></> : <path fillRule="evenodd" d="M1 6 H11 V13 H1Z M5 8 V11 H7 V8Z" />}
  </Icon>
);
const NewIcon = ({ size = 12 }: { size?: number }) => (
  <Icon w={size} h={12}><path d="M1 1 H11 V11 H7 V5 H1Z" /><path d="M1 6.2 H6 V11Z" /></Icon>
);
const Trash = ({ color }: { color?: string }) => (
  <Icon w={12} h={12} color={color}><path d="M4 0 H8 V1.5 H12 V3 H0 V1.5 H4Z" /><path {...line} strokeWidth="1.3" d="M1.6 4 L2.2 11.3 H9.8 L10.4 4 M4.3 4 V11 M6 4 V11 M7.7 4 V11" /></Icon>
);
const ResizeDots = () => (
  <Icon w={10} h={10} color="#2a2a2a"><path {...line} strokeDasharray="1 1" d="M8 0.5 H10 M6 2.5 H10 M4 4.5 H10 M2 6.5 H10 M0 8.5 H10" /></Icon>
);

function ColorSlider({ name, value, unit, fill, pos }: { name: string; value: string; unit: string; fill: string; pos: number }) {
  return (
    <SliderRow>
      <label htmlFor={`v${name}`}>{name}</label>
      <Slider type="range" aria-label={name} defaultValue={pos} $fill={fill} />
      <input type="text" id={`v${name}`} defaultValue={value} />
      <span>{unit}</span>
    </SliderRow>
  );
}

function Field({ id, dim }: { id: string; dim?: boolean }) {
  return (
    <Combo $dim={dim}>
      <input id={id} type="text" defaultValue="100%" />
      <Drop><Caret color={dim ? "#aaa" : undefined} /></Drop>
    </Combo>
  );
}

export default function App() {
  return (
    <Shell>
      <GlobalStyle />
      <Defs />
      <MenuBar>
        <Logo>Ps</Logo>
        <Menu>{menus.map((m) => <button key={m}>{m}</button>)}</Menu>
        <WindowButtons>
          <button aria-label="Minimieren"><Icon w={11} h={10} color="#eee"><path d="M0 6 H11 V10 H0Z" /></Icon></button>
          <button aria-label="Maximieren"><Icon w={11} h={10} color="#eee"><path {...line} strokeWidth="2.5" d="M1.5 1.5 H9.5 V8.5 H1.5Z" /></Icon></button>
          <button aria-label="Schließen"><Icon w={11} h={10} color="#eee"><path {...line} strokeWidth="2.5" d="M1.5 1 L9.5 9 M9.5 1 L1.5 9" /></Icon></button>
        </WindowButtons>
      </MenuBar>

      <OptionsBar>
        <Grip $vertical />
        <BrushPick aria-label="Werkzeugvorgabe"><Icon w={20} h={18}><BrushPaths /></Icon><Caret /></BrushPick>
        <Rule />
        <PresetButton aria-label="Pinselvorgabe">
          <PresetFace>492</PresetFace>
          <PresetDrop><Caret /></PresetDrop>
        </PresetButton>
        <FolderSlot aria-label="Pinselbedienfeld"><BrushFolder /></FolderSlot>
        <Rule />
        <OptLabel htmlFor="mode">Modus:</OptLabel>
        <Picker $w={142}>
          <select id="mode"><option>Normal</option></select>
          <UpDown />
        </Picker>
        <NextLabel htmlFor="opacity">Deckkr.:</NextLabel>
        <Field id="opacity" />
        <AirSlot aria-label="Druck für Deckkraft">
          <Icon w={20} h={18}>
            <circle cx="7.5" cy="10.5" r="6.3" fill="#6c6c6c" stroke="currentColor" strokeWidth="1.3" />
            <path {...line} strokeDasharray="2 2" strokeWidth="2" d="M4 7 H12 M2 9 H13 M4 11 H13 M2 13 H12 M6 15 H10" />
            <path d="M19 0 L10 7.5 L7.5 12 L12.5 9.5 L20 2Z" stroke="#535353" strokeWidth=".8" />
          </Icon>
        </AirSlot>
        <Rule />
        <OptLabel htmlFor="flow">Fluss:</OptLabel>
        <Field id="flow" />
        <AirSlot aria-label="Airbrush">
          <Icon w={20} h={16}>
            <path d="M7 1.5 Q1 2.5 1 8 Q1 13 6 14 L7 12 Q4 11 4 8 Q4 4 7.5 3.5Z" />
            <path {...line} strokeWidth="1.4" d="M9.5 4 Q6.5 5 6.8 9" />
            <path d="M10 2 L12.5 1.5 L16 12 L14.5 14Z" />
            <path d="M18 1 L10 7.5 L6 13 L5 15 L8 14 L13 10.5 L19 3Z" stroke="#535353" strokeWidth=".6" />
          </Icon>
        </AirSlot>
        <Rule />
        <PlainButton aria-label="Druck für Größe">
          <Icon w={20} h={18}>
            <circle {...line} cx="7.5" cy="10.5" r="6.3" strokeWidth="1.5" /><circle {...line} cx="7.5" cy="10.5" r="3" strokeWidth="1.5" />
            <path d="M19 0 L10 7.5 L7.5 12 L12.5 9.5 L20 2Z" stroke="#535353" strokeWidth=".8" />
          </Icon>
        </PlainButton>
        <Spread />
        <Picker $w={142}>
          <select aria-label="Arbeitsbereich"><option>Jurek Matte P</option></select>
          <UpDown />
        </Picker>
      </OptionsBar>

      <Workspace>
        <Column $w={37}>
          <Collapse $pad={3} aria-label="Werkzeuge erweitern"><TwoChevrons /></Collapse>
          <Tools>
            <ToolGrip><Grip /></ToolGrip>
            {toolGroups.map((group, g) => (
              <React.Fragment key={g}>
                {g > 0 && <ToolGap />}
                {group.map((t) => (
                  <ToolButton key={t.name} $on={t.name === "Pinsel"} aria-label={t.name}>
                    <Icon w={20} h={20}>{t.art}</Icon>
                    {!t.single && <Corner />}
                  </ToolButton>
                ))}
              </React.Fragment>
            ))}
            <SwapRow>
              <Icon w={10} h={10}><path d="M3 3 H10 V10 H3Z" /><path d="M.7 .7 H6.3 V6.3 H.7Z" fill="#333" stroke="currentColor" strokeWidth="1.3" /></Icon>
              <Icon w={10} h={10}><path {...line} strokeWidth="1.4" d="M2 3 H5 Q8 3 8 7" /><path d="M0 3 L3.5 0 V6Z M8 10 L5 6.5 H11Z" /></Icon>
            </SwapRow>
            <Swatches><i /><i /></Swatches>
            <ToolFoot>
              <Icon w={17} h={13}><rect x=".5" y=".5" width="16" height="12" fill="#333" stroke="currentColor" /><circle {...line} cx="8.5" cy="6.5" r="4" strokeDasharray="1.2 1.2" strokeWidth="1.3" /></Icon>
              <Icon w={17} h={13}><path {...line} strokeWidth="1.5" d="M4 5 H1 V12 H12 V9" /><rect x="5" y="1" width="11" height="8" fill="#999" stroke="currentColor" strokeWidth="1.5" /></Icon>
            </ToolFoot>
          </Tools>
        </Column>

        <Column $w={271}>
          <Collapse $pad={4} aria-label="Bedienfelder reduzieren"><TwoChevrons left /></Collapse>
          <Panel>
            <TabRow>
              <Tab $on>Farbe</Tab><Tab>Farbfelder</Tab>
              <TabTools><MenuIcon /></TabTools>
            </TabRow>
            <ColorBody>
              <ColorSwatch><i /><i /></ColorSwatch>
              <div>
                <ColorSlider name="H" value="0" unit="°" pos={0} fill="linear-gradient(90deg, #d8203a, #ff9a10 9%, #f4f02a 17%, #28e81c 34%, #34e4ea 50%, #1414c8 66%, #cf10d8 83%, #d8103a)" />
                <ColorSlider name="S" value="0" unit="%" pos={0} fill="linear-gradient(90deg, #fff, #c81432)" />
                <ColorSlider name="B" value="100" unit="%" pos={100} fill="linear-gradient(90deg, #000, #fff)" />
              </div>
            </ColorBody>
            <Spectrum><i /><i /></Spectrum>
          </Panel>
          <Panel>
            <TabRow>
              <Tab $on>Korrekturen</Tab>
              <TabTools><MenuIcon /></TabTools>
            </TabRow>
            <AdjustBody>
              <PanelHint>Korrektur hinzufügen</PanelHint>
              {adjustIcons.map((row, r) => (
                <AdjustRow key={r} $indent={[46, 35, 47][r]}>
                  {row.map((a) => <PlainButton key={a.name} aria-label={a.name}><Icon>{a.art}</Icon></PlainButton>)}
                </AdjustRow>
              ))}
            </AdjustBody>
          </Panel>
          <Panel $grow>
            <TabRow>
              <Tab $on>Ebenen</Tab><Tab>Kanäle</Tab><Tab>Pfade</Tab>
              <TabTools><MenuIcon /></TabTools>
            </TabRow>
            <LayerBars>
              <LayerBar>
                <Picker $w={86} $dim>
                  <PickerGlass><Icon w={11} h={11} color="#aaa"><circle {...line} cx="7" cy="4.5" r="3.7" strokeWidth="1.3" /><path {...line} strokeWidth="1.6" d="M4.5 7 L1 10.5" /></Icon></PickerGlass>
                  <select aria-label="Filterart"><option>Art</option></select>
                  <UpDown color="#b0b0b0" />
                </Picker>
                <FilterIcons>
                  <Icon color={c.dim}><rect {...line} x="1.7" y="2.7" width="12.6" height="10.6" strokeWidth="1.3" /><path d="M3 12 L6 7 L8.5 10 L10.5 8 L13 12Z M10 4 H12 V6 H10Z" /></Icon>
                  <Icon color={c.dim}><circle {...line} cx="8" cy="8" r="5" strokeWidth="1.4" /><path d="M11.5 4.5 A5 5 0 1 0 4.5 11.5Z" /></Icon>
                  <Icon color={c.dim}><text x="8" y="13" fontSize="15" textAnchor="middle" fontFamily="Liberation Serif, serif">T</text></Icon>
                  <Icon color={c.dim}><rect {...line} x="4" y="4" width="8" height="8" strokeWidth="1.2" /><path d="M2 2 H5.5 V5.5 H2Z M10.5 2 H14 V5.5 H10.5Z M2 10.5 H5.5 V14 H2Z M10.5 10.5 H14 V14 H10.5Z" /></Icon>
                  <Icon color={c.dim}><path {...line} strokeWidth="1.3" d="M5.5 7 V2.5 H10 L13.5 6 V13.5 H9 M10 2.5 V6 H13.5" /><path d="M2 8 H8 V14 H2Z" /></Icon>
                </FilterIcons>
                <Toggle />
              </LayerBar>
              <LayerBar>
                <Picker $w={147} $dim>
                  <select aria-label="Füllmethode"><option>Normal</option></select>
                  <UpDown color="#b0b0b0" />
                </Picker>
                <RightLabel htmlFor="lo">Deckkraft:</RightLabel>
                <Field id="lo" dim />
              </LayerBar>
              <LayerBar>
                <LockLabel>Fixieren:</LockLabel>
                <LockIcons>
                  <Icon w={14} color={c.dim}><path d="M2 3 H13 V14 H2Z" /><path fill="#555" d="M3 4 H6 V7 H3Z M9 4 H12 V7 H9Z M6 7 H9 V10 H6Z M3 10 H6 V13 H3Z M9 10 H12 V13 H9Z" opacity=".7" /></Icon>
                  <Icon w={17} h={16} color={c.dim}><path d="M16 1 L8.5 7.5 L10.5 9.5 L16.6 2Z M8 8.5 Q5 8.5 4.5 11 L1 13.5 Q8 16 9.6 10.5Z" /></Icon>
                  <Icon w={14} h={16} color={c.dim}><path {...line} strokeWidth="1.3" d="M7 2 V14 M1 8 H13" /><path d="M7 1 L4.5 4 H9.5Z M7 15 L4.5 12 H9.5Z M0 8 L3 5.5 V10.5Z M14 8 L11 5.5 V10.5Z" /></Icon>
                  <Lock />
                </LockIcons>
                <RightLabel htmlFor="lf">Fläche:</RightLabel>
                <Field id="lf" dim />
              </LayerBar>
            </LayerBars>
            <LayerList>
              <Layer>
                <span><Icon w={12} h={10} color="#d4d4d4"><path {...line} strokeWidth="1.5" d="M.5 5.5 Q6 -1.5 11.5 5.5 Q6 11 .5 5.5Z" /><circle cx="6" cy="5" r="2.2" /></Icon></span>
                <LayerFace>Hintergrund<Lock open /></LayerFace>
              </Layer>
            </LayerList>
            <LayerFoot>
              <Icon w={14} h={16} color={c.dim}><path {...line} strokeWidth="1.5" d="M6 5 H4 Q1 5 1 8 Q1 11 4 11 H6 M8 5 H10 Q13 5 13 8 Q13 11 10 11 H8 M4 8 H10" /></Icon>
              <Icon color={c.dim}><text x="8" y="13" fontSize="14" fontStyle="italic" textAnchor="middle" fontFamily="Liberation Serif, serif">fx</text></Icon>
              <Icon><path fillRule="evenodd" d="M1 3 H14 V14 H1Z M7.5 5.5 A3 3 0 1 0 7.51 5.5Z" /></Icon>
              <Icon><circle {...line} cx="7" cy="8" r="5" strokeWidth="1.4" /><path d="M10.5 4.5 A5 5 0 1 0 3.5 11.5Z M14 13 H17 L15.5 15Z" /></Icon>
              <Icon><path d="M0 3 H5 L6 4.5 H12 V13 H0Z" /></Icon>
              <NewIcon size={16} />
              <Trash color={c.dim} />
            </LayerFoot>
          </Panel>
        </Column>

        <Column $w={36}>
          <Collapse $pad={3} aria-label="Symbole erweitern"><TwoChevrons /></Collapse>
          <Dock>
            <DockGroup>
              <Grip />
              <DockButton aria-label="Zeichen"><DockLetter>A|</DockLetter></DockButton>
              <DockButton aria-label="Absatz"><DockLetter>¶</DockLetter></DockButton>
            </DockGroup>
            <DockGroup>
              <Grip />
              <DockButton aria-label="Protokoll"><Icon w={18} h={18}><path {...line} strokeWidth="1.3" d="M2.5 1.5 H6 V5 H2.5Z M2.5 7 H6 V10.5 H2.5Z" /><path d="M2 12 H7 V17 H2Z" /><path {...line} strokeWidth="2" d="M10 15 Q16 12 13.5 6" /><path d="M9 6 L14 2 L16.5 7Z" /></Icon></DockButton>
              <DockButton aria-label="Aktionen"><Icon w={18} h={18}><path d="M2 3 L17 9 L2 15Z" /></Icon></DockButton>
            </DockGroup>
            <DockGroup>
              <Grip />
              <DockButton aria-label="Navigator"><Icon w={18} h={18}><path d="M4 17 L5.5 13 Q3.5 12 4.5 9 L6 10 Q5.5 6 8 5 L9 7 Q9 3 13.5 1 L13 4.5 L15 4 Q15 6.5 12.5 8 L14.5 8.5 Q13.5 11 10.5 11 L11.5 12.5 Q9 14.5 6.5 13.5 L5.2 17Z" /></Icon></DockButton>
            </DockGroup>
            <DockGroup>
              <Grip />
              <DockButton aria-label="3D"><Icon w={18} h={18}><path {...line} strokeWidth="1.3" d="M1.5 2 H5 V5.5 H1.5Z M1.5 8 H5 V11.5 H1.5Z M1.5 14 H16 V17 H1.5Z" /><path d="M12 1 L17 3.5 V9.5 L12 12 L7.5 9.5 V3.5Z" /><path stroke="#555" fill="none" d="M8 4 L12 6 L17 4 M12 6 V11" /></Icon></DockButton>
            </DockGroup>
            <DockGroup>
              <Grip />
              <DockButton aria-label="Pinsel"><Icon w={18} h={18}><path d="M6 10 H13 V17 H6Z M8.5 1 H10.5 V7 H8.5Z M1.5 3 L4.5 2 L6.5 6 L4.5 8Z M12 5 L17 3 L16 7 L13 8Z" /><path {...line} strokeWidth="1.3" d="M5 6 L8 11 M9.5 6 V11 M14 6 L11.5 11" /><path stroke="#555" d="M6 12 H13" /></Icon></DockButton>
              <DockButton $on aria-label="Pinselvorgaben"><Icon w={20} h={18}><path {...line} strokeWidth="1.6" d="M8 4.5 H18.5 M1.5 13.5 H10" /><path d="M1 2.5 L6 2 Q9 4.5 6 7 L1 6.5 L3 4.5Z M10 11.5 Q14 9.5 15 12 L19 13.5 L15 15 Q13 17 10 15.5Z" /></Icon></DockButton>
            </DockGroup>
          </Dock>
        </Column>

        <DocArea>
          <DocTabs>
            <DocTab $w={210} $on><span>Unbenannt-1 bei 8.33% (RGB/8) *</span><PlainButton aria-label="Schließen"><CloseX /></PlainButton></DocTab>
            {docs.map(([d, w]) => (
              <DocTab key={d} $w={w}><span>{d}</span><PlainButton aria-label={`${d} schließen`}><CloseX /></PlainButton></DocTab>
            ))}
            <DocTab $w={84}><span>Rumpelstilzchen</span></DocTab>
            <MoreTabs aria-label="Weitere Dokumente"><Icon w={12} h={8}><path {...line} strokeWidth="1.6" d="M1 0 L5 4 L1 8 M6.5 0 L10.5 4 L6.5 8" /></Icon></MoreTabs>
          </DocTabs>
          <Ruler>
            <RulerCells>{ticks.map((t, i) => <RulerCell key={i}>{t}</RulerCell>)}</RulerCells>
            <PointerMark />
          </Ruler>
          <Canvas>
            <Artboard />
            <VScroll />
          </Canvas>
          <Status>
            <span>8.33%</span>
            <Icon w={10} h={10}><path {...line} strokeWidth="1.3" d="M1 3 V9 H9 V3 M1 6 H6" /></Icon>
            <span>Dok: 127,5 MB/0 Byte</span>
            <Icon w={7} h={8}><path d="M0 0 L7 4 L0 8Z" /></Icon>
          </Status>

          <BrushPanel>
            <TabRow>
              <Tab>Pinsel</Tab><Tab $on>Pinselvorgaben</Tab>
              <TabTools><TwoChevrons left /><ThinRule /><MenuIcon /></TabTools>
            </TabRow>
            <SizeBody>
              <label htmlFor="size">Größe:</label>
              <input id="size" type="text" defaultValue="492 Px" />
              <PlainButton aria-label="Pinselbedienfeld einblenden"><BrushFolder /></PlainButton>
              <SizeSlider type="range" aria-label="Größe" defaultValue={90} />
            </SizeBody>
            <Recent>
              {recent.map(([n, level, shape], i) => (
                <RecentButton key={i}><Thumb><Svg width="31" height="20"><Fog level={level} shape={shape} /></Svg><b>{n}</b></Thumb></RecentButton>
              ))}
            </Recent>
            <ListFrame>
              <List>
                {leftBrushes.map(([n, name, key], i) => {
                  const [rn, level, shape] = rightBrushes[i];
                  return (
                    <React.Fragment key={i}>
                      <BrushItem><Thumb><Svg width="31" height="20">{art[key]}</Svg><b>{n}</b></Thumb><em>{name}</em></BrushItem>
                      <BrushItem><Thumb><Svg width="31" height="20"><Fog level={level} shape={shape} /></Svg><b>{rn}</b></Thumb><em>Rons Fog II</em></BrushItem>
                    </React.Fragment>
                  );
                })}
              </List>
              <ListScroll>
                <Icon w={6} h={3} color="#eee"><path d="M0 3 H6 L3 0Z" /></Icon>
                <span /><i /><span />
                <Icon w={6} h={3} color="#eee"><path d="M0 0 H6 L3 3Z" /></Icon>
              </ListScroll>
            </ListFrame>
            <BrushFoot>
              <Icon w={18} h={12} color="#858585"><path {...line} strokeWidth="1.5" d="M.5 6 Q5 1 10 5 M.5 6 Q4 11 9 9" /><circle cx="5.5" cy="6" r="2" /><path d="M17.5 2 L12 7.5 L8.5 11.5 L13 10.5 L18 3Z" /></Icon>
              <Icon w={12} h={12}><path d="M0 1 H12 V11 H0Z" /><path stroke="#444" strokeWidth="1.3" fill="none" d="M2 3.5 H4 M5 3.5 H7 M8 3.5 H10 M2 6 H5 M6 6 H10 M2 8.5 H4 M5 8.5 H10" /></Icon>
              <NewIcon />
              <Trash />
              <ResizeDots />
            </BrushFoot>
            <BrushBase><Grip /></BrushBase>
          </BrushPanel>
          <Cursor>
            <Icon w={12} h={18} color="#fff"><path d="M0 0 V14 L3.2 11 L6 17 L8.5 16 L5.8 10 H10Z" /></Icon>
          </Cursor>
        </DocArea>
      </Workspace>

      <Watermark>
        <Svg width="65" height="60" viewBox="195 280 195 180" $color="#a0a0a0" fill="currentColor" aria-hidden="true">
          <path d="M208 290 Q255 275 298 348 L285 364 Q250 308 206 306Z" />
          <path d="M206 296 Q186 330 236 402 Q216 400 209 418 Q206 438 232 444 Q250 446 262 430 L264 440 Q246 456 220 444 Q198 428 212 408 Q216 402 226 400 Q178 330 206 296Z" />
          <path fillRule="evenodd" d="M264 434 Q258 340 382 322 Q392 360 312 406 Q330 420 290 452 Q270 448 264 434Z M284 428 Q286 370 372 330 Q360 364 304 396 L310 376 L296 392 L292 428Z M302 404 L290 440 Q312 420 302 404Z" />
        </Svg>
        <span>PSD-Tutorials.de</span>
      </Watermark>
    </Shell>
  );
}
